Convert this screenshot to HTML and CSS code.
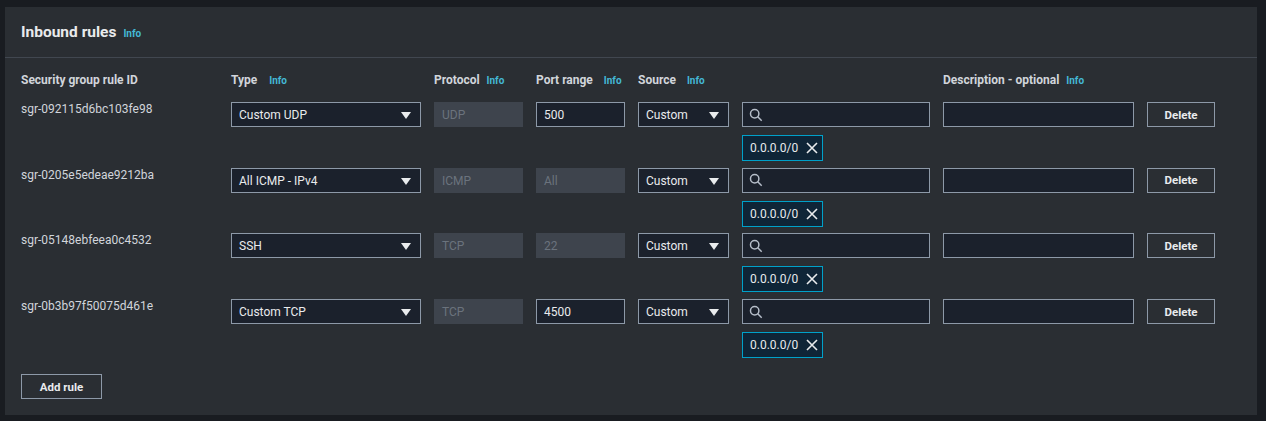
FILE: index.html
```html
<!DOCTYPE html>
<html>
<head>
<meta charset="utf-8">
<link rel="stylesheet" href="styles.css">
</head>
<body>
<div class="card">
  <div class="card-head">
    <h2 class="title">Inbound rules</h2><a class="info info-title">Info</a>
  </div>
  <div class="card-body">
    <div class="grid head-row">
      <div class="lbl">Security group rule ID</div>
      <div class="lbl">Type <a class="info info-wide">Info</a></div>
      <div class="lbl">Protocol <a class="info info-tight">Info</a></div>
      <div class="lbl">Port range <a class="info">Info</a></div>
      <div class="lbl lbl-wide">Source <a class="info">Info</a></div>
      <div class="lbl lbl-desc">Description - optional <a class="info info-tight">Info</a></div>
      <div></div>
    </div>

    <div class="rules">
    <div class="grid rule">
      <div class="rid">sgr-092115d6bc103fe98</div>
      <div class="select">Custom UDP<span class="caret"></span></div>
      <div class="input disabled">UDP</div>
      <div class="input">500</div>
      <div class="select">Custom<span class="caret"></span></div>
      <div class="src">
        <div class="input search"><svg class="mag" viewBox="0 0 16 16"><circle cx="6.5" cy="6.5" r="4.8"/><path d="M10 10l4.5 4.5"/></svg></div>
        <div class="token">0.0.0.0/0<svg class="x" viewBox="0 0 12 12"><path d="M1 1l10 10M11 1L1 11"/></svg></div>
      </div>
      <div class="input"></div>
      <div class="btn">Delete</div>
    </div>

    <div class="grid rule">
      <div class="rid">sgr-0205e5edeae9212ba</div>
      <div class="select">All ICMP - IPv4<span class="caret"></span></div>
      <div class="input disabled">ICMP</div>
      <div class="input disabled">All</div>
      <div class="select">Custom<span class="caret"></span></div>
      <div class="src">
        <div class="input search"><svg class="mag" viewBox="0 0 16 16"><circle cx="6.5" cy="6.5" r="4.8"/><path d="M10 10l4.5 4.5"/></svg></div>
        <div class="token">0.0.0.0/0<svg class="x" viewBox="0 0 12 12"><path d="M1 1l10 10M11 1L1 11"/></svg></div>
      </div>
      <div class="input"></div>
      <div class="btn">Delete</div>
    </div>

    <div class="grid rule">
      <div class="rid">sgr-05148ebfeea0c4532</div>
      <div class="select">SSH<span class="caret"></span></div>
      <div class="input disabled">TCP</div>
      <div class="input disabled">22</div>
      <div class="select">Custom<span class="caret"></span></div>
      <div class="src">
        <div class="input search"><svg class="mag" viewBox="0 0 16 16"><circle cx="6.5" cy="6.5" r="4.8"/><path d="M10 10l4.5 4.5"/></svg></div>
        <div class="token">0.0.0.0/0<svg class="x" viewBox="0 0 12 12"><path d="M1 1l10 10M11 1L1 11"/></svg></div>
      </div>
      <div class="input"></div>
      <div class="btn">Delete</div>
    </div>

    <div class="grid rule">
      <div class="rid">sgr-0b3b97f50075d461e</div>
      <div class="select">Custom TCP<span class="caret"></span></div>
      <div class="input disabled">TCP</div>
      <div class="input">4500</div>
      <div class="select">Custom<span class="caret"></span></div>
      <div class="src">
        <div class="input search"><svg class="mag" viewBox="0 0 16 16"><circle cx="6.5" cy="6.5" r="4.8"/><path d="M10 10l4.5 4.5"/></svg></div>
        <div class="token">0.0.0.0/0<svg class="x" viewBox="0 0 12 12"><path d="M1 1l10 10M11 1L1 11"/></svg></div>
      </div>
      <div class="input"></div>
      <div class="btn">Delete</div>
    </div>
    </div>

    <div class="btn add">Add rule</div>
  </div>
</div>
</body>
</html>
```

FILE: styles.css
```css
* { box-sizing: border-box; }
html, body { margin: 0; padding: 0; }
body {
  background: #191c21;
  font-family: Roboto, "Open Sans", sans-serif;
  font-size: 12px;
  color: #d1d5db;
  padding: 7px 9px 0 5px;
}
.card {
  background: #2a2e33;
  width: 1252px;
  height: 408px;
}
.card-head {
  height: 51px;
  border-bottom: 1px solid #414750;
  display: flex;
  align-items: center;
  padding: 0 16px;
  gap: 7px;
}
.title {
  margin: 0;
  font-size: 15.5px;
  font-weight: 700;
  color: #e9ebed;
}
.info {
  color: #44b9d6;
  font-size: 10px;
  font-weight: 700;
  margin-left: 8px;
}
.info-wide { margin-left: 9px; }
.info-tight { margin-left: 4px; }
.info-title { margin-left: 0; padding-top: 3px; }
.card-body {
  padding: 14px 16px 16px 16px;
}
.grid {
  display: grid;
  grid-template-columns: 197px 190px 89px 89px 91px 188px 191px 68px;
  column-gap: 13px;
}
.head-row { margin-bottom: 13px; }
.lbl {
  font-weight: 700;
  font-size: 12px;
  line-height: 16px;
  color: #d1d5db;
  white-space: nowrap;
}
.lbl-wide { grid-column: span 2; }
.rules { display: flex; flex-direction: column; gap: 6.7px; }
.rule { align-items: start; }
.rid { line-height: 14px; padding-top: 0; font-size: 12px; }
.select, .input {
  height: 25px;
  border: 1px solid #8d99a8;
  background: #1b212c;
  line-height: 24px;
  padding: 0 7px;
  color: #e9ebed;
  position: relative;
  font-size: 12px;
}
.input.disabled {
  background: #3e444d;
  border-color: #3e444d;
  color: #6b737d;
}
.caret {
  position: absolute;
  right: 9px;
  top: 9px;
  width: 0; height: 0;
  border-left: 5px solid transparent;
  border-right: 5px solid transparent;
  border-top: 7px solid #e9ebed;
}
.src { display: flex; flex-direction: column; gap: 8px; }
.search { display: flex; align-items: center; padding-left: 6px; }
.mag { width: 14px; height: 14px; fill: none; stroke: #b6bec9; stroke-width: 1.7; }
.token {
  width: 81px;
  height: 26px;
  border: 1px solid #00a1c9;
  background: #0f2537;
  display: flex;
  align-items: center;
  padding-left: 7px;
  gap: 8px;
  color: #e9ebed;
  font-size: 12px;
}
.x { width: 12px; height: 12px; stroke: #e9ebed; stroke-width: 1.6; fill: none; }
.btn {
  height: 25px;
  border: 1px solid #8d99a8;
  display: flex;
  align-items: center;
  justify-content: center;
  font-weight: 700;
  font-size: 11.5px;
  color: #e9ebed;
}
.add { width: 81px; margin-top: 16px; }
```
